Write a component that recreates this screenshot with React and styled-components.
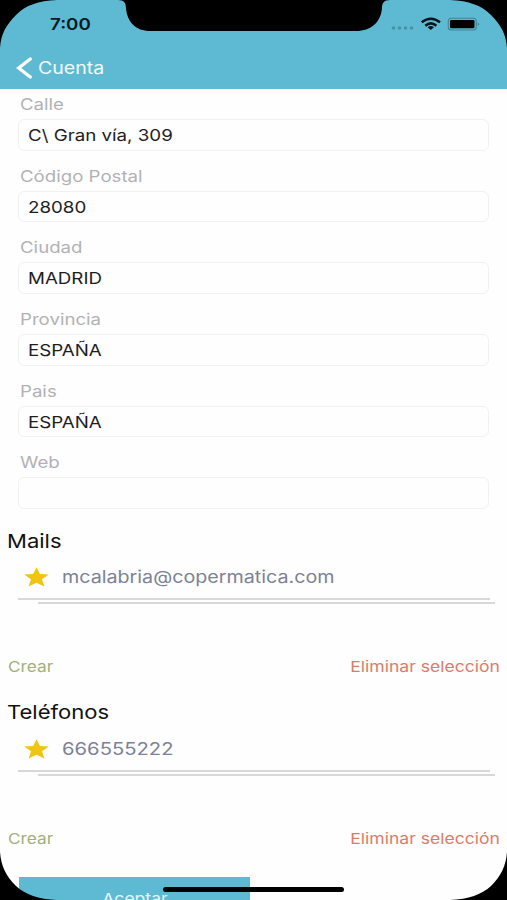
import React from 'react';
import styled, { createGlobalStyle } from 'styled-components';

const GlobalStyle = createGlobalStyle`
  body {
    margin: 0;
    background: #000;
    font-family: 'Inter', 'Liberation Sans', sans-serif;
  }
`;

const Screen = styled.div`
  position: relative;
  display: flex;
  flex-direction: column;
  width: 507px;
  height: 900px;
  overflow: hidden;
  background: #fefefe;
`;

const Text = styled.span`
  display: inline-block;
  white-space: nowrap;
  transform: scaleX(${({ $wide }) => $wide || 1.17});
  transform-origin: ${({ $origin }) => $origin || 'left'} center;
`;

const Header = styled.header`
  display: flex;
  flex-direction: column;
  height: 89.4px;
  flex-shrink: 0;
  background: #5dbad2;
`;

const StatusBar = styled.div`
  display: flex;
  justify-content: space-between;
  align-items: center;
  height: 47px;
  padding: 0 26px 0 50px;
`;

const Time = styled.div`
  font-size: 16px;
  font-weight: 600;
  color: #0b1a1f;
`;

const StatusIcons = styled.svg`
  width: 92px;
  height: 20px;
`;

const BackButton = styled.div`
  display: flex;
  align-items: center;
  height: 41px;
  padding-left: 16px;
  font-size: 17px;
  color: #f4fbfd;
`;

const BackIcon = styled.svg`
  width: 17px;
  height: 22px;
  margin-right: 5px;
`;

const Fields = styled.div`
  display: flex;
  flex-direction: column;
  flex-shrink: 0;
  gap: 15px;
  padding: 4.5px 18px 19.8px;
`;

const Field = styled.div`
  display: flex;
  flex-direction: column;
  gap: 5px;
`;

const Label = styled.div`
  height: 20px;
  padding-left: 2px;
  line-height: 20px;
  font-size: 16px;
  color: #b2b2b5;
`;

const Value = styled.div`
  box-sizing: border-box;
  height: 31.67px;
  padding-left: 9px;
  border: 1px solid #f1f1f1;
  border-radius: 6px;
  line-height: 30px;
  font-size: 16px;
  color: #1d1d1f;
`;

const Section = styled.section`
  display: flex;
  flex-direction: column;
  flex-shrink: 0;
  height: 171.67px;
`;

const Title = styled.h2`
  height: 25px;
  margin: 0;
  padding-left: 7px;
  line-height: 26px;
  font-size: 19px;
  font-weight: 400;
  color: #111;
`;

const Entry = styled.div`
  display: flex;
  align-items: center;
  box-sizing: border-box;
  height: 46.5px;
  margin: 0 17px 0 18px;
  padding: 3px 0 0 6px;
  border-bottom: 2px solid #d8d8d8;
  font-size: 17px;
  color: #7c8296;
`;

const Star = styled.svg`
  width: 25px;
  height: 20px;
  margin-right: 13px;
`;

const Separator = styled.div`
  height: 2px;
  margin: 2px 12px 0 38px;
  background: #d8d8d8;
`;

const Actions = styled.div`
  display: flex;
  justify-content: space-between;
  margin-top: 52px;
  padding: 0 7px 0 8px;
  line-height: 22px;
  font-size: 15px;
`;

const Create = styled.span`
  color: #a0b07c;
`;

const Remove = styled.span`
  color: #d97c6a;
`;

const Accept = styled.div`
  flex-shrink: 0;
  width: 231px;
  height: 42px;
  margin: 5px 0 0 19px;
  background: #5dbad2;
  color: #e6f5f9;
  font-size: 15px;
  line-height: 43px;
  text-align: center;
`;

const Bezel = styled.svg`
  position: absolute;
  top: 0;
  left: 0;
  width: 507px;
  height: 900px;
`;

const HomeIndicator = styled.div`
  position: absolute;
  left: 163px;
  top: 887px;
  width: 181px;
  height: 5px;
  border-radius: 3px;
  background: #000;
`;

const fields = [
  { label: 'Calle', value: 'C\\ Gran vía, 309' },
  { label: 'Código Postal', value: '28080' },
  { label: 'Ciudad', value: 'MADRID' },
  { label: 'Provincia', value: 'ESPAÑA' },
  { label: 'Pais', value: 'ESPAÑA' },
  { label: 'Web', value: '' },
];

const Contacts = ({ title, value, wide }) => (
  <Section>
    <Title><Text $wide={1.16}>{title}</Text></Title>
    <Entry>
      <Star viewBox="0 0 25 20">
        <path d="M12.5 0.3 L15.9 7 L24.8 7.6 L18 12.3 L20.4 19.6 L12.5 15.7 L4.6 19.6 L7 12.3 L0.2 7.6 L9.1 7 Z" fill="#f1c40f" />
      </Star>
      <Text $wide={wide}>{value}</Text>
    </Entry>
    <Separator />
    <Actions>
      <Create><Text $wide={1.15}>Crear</Text></Create>
      <Remove><Text $origin="right">Eliminar selección</Text></Remove>
    </Actions>
  </Section>
);

const App = () => {
  return (
    <>
      <GlobalStyle />
      <Screen>
        <Header>
          <StatusBar>
            <Time><Text>7:00</Text></Time>
            <StatusIcons viewBox="0 0 92 20">
              <g fill="#4793a7">
                <circle cx="4.5" cy="14" r="1.8" />
                <circle cx="10.5" cy="14" r="1.8" />
                <circle cx="16.5" cy="14" r="1.8" />
                <circle cx="22.5" cy="14" r="1.8" />
              </g>
              <g fill="none" stroke="#061418" strokeWidth="2.5">
                <path d="M32.7 8.3 Q41.8 1.2 51 8.3" />
                <path d="M36.3 11.7 Q41.8 7 47.4 11.7" />
              </g>
              <path d="M38.6 13.2 Q41.8 10.8 45 13.2 L41.8 16 Z" fill="#061418" />
              <rect x="59.3" y="4.2" width="28" height="11.8" rx="3" fill="none" stroke="#3f8596" strokeWidth="1.1" />
              <rect x="61" y="5.9" width="24.5" height="8.4" rx="1.4" fill="#000" />
              <path d="M88.8 8.2 Q91.6 10.1 88.8 12 Z" fill="#3f8596" />
            </StatusIcons>
          </StatusBar>
          <BackButton>
            <BackIcon viewBox="0 0 17 22">
              <path d="M14.2 2 L2.7 11 L14.2 20" fill="none" stroke="#fff" strokeWidth="3.3" strokeLinecap="round" />
            </BackIcon>
            <Text $wide={1.15}>Cuenta</Text>
          </BackButton>
        </Header>
        <Fields>
          {fields.map(({ label, value }) => (
            <Field key={label}>
              <Label><Text $wide={1.165}>{label}</Text></Label>
              <Value><Text>{value}</Text></Value>
            </Field>
          ))}
        </Fields>
        <Contacts title="Mails" value="mcalabria@copermatica.com" wide={1.158} />
        <Contacts title="Teléfonos" value="666555222" wide={1.19} />
        <Accept><Text $origin="center">Aceptar</Text></Accept>
        <Bezel viewBox="0 0 507 900">
          <path d="M0 0 H57 C38 1 26 5 16 15 C6 25 1 34 0 48 Z" />
          <path d="M507 0 H450 C469 1 481 5 491 15 C501 25 506 34 507 48 Z" />
          <path d="M0 852 C1 866 6 876 16 886 C26 895 38 899 57 900 H0 Z" />
          <path d="M507 852 C506 866 501 876 491 886 C481 895 469 899 450 900 H507 Z" />
          <path d="M118 0 C124 0 126 3 126 8 C127 22 136 31 150 31 H356 C371 31 381 22 382 8 C382 3 384 0 390 0 Z" />
        </Bezel>
        <HomeIndicator />
      </Screen>
    </>
  )
}

export default App
